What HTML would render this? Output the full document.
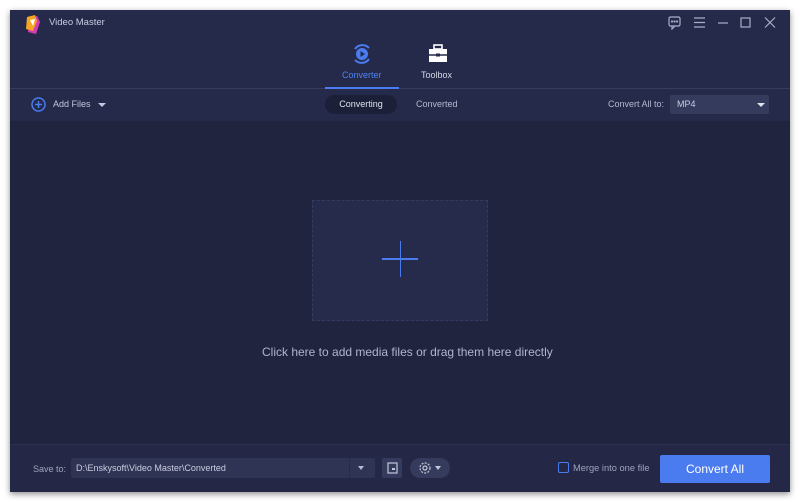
<!DOCTYPE html>
<html><head><style>
*{margin:0;padding:0;box-sizing:border-box}
body{width:800px;height:503px;background:#fff;font-family:"Liberation Sans",sans-serif;position:relative;overflow:hidden}
.win{position:absolute;left:10px;top:10px;width:780px;height:482px;background:#20243f;box-shadow:0 2px 6px rgba(0,0,0,.45)}
.hdr{position:absolute;left:0;top:0;width:780px;height:79px;background:#252a4a;border-bottom:1px solid #363c5e}
.tb{position:absolute;left:0;top:79px;width:780px;height:32px;background:#252a4a}
.bot{position:absolute;left:0;top:434px;width:780px;height:48px;background:#242846;border-top:1px solid #2c3152}
.t{position:absolute;white-space:nowrap}
</style></head><body>
<div class="win">
<div class="hdr">
 <svg class="t" style="left:14px;top:4px" width="20" height="22" viewBox="0 0 20 22">
  <path d="M5 4 L13 2 L16 8 L12 20 L4 18 Z" fill="#d63ab8"/>
  <path d="M3 3 L11 1 L13 7 L9 17 L2 15 Z" fill="#f5a623"/>
  <path d="M6 6 L11 5 L9 12 Z" fill="#fff"/>
 </svg>
 <div class="t" style="left:39px;top:7px;font-size:9.5px;color:#c9cce0">Video Master</div>
 <svg class="t" style="left:658px;top:6px" width="120" height="14" viewBox="0 0 120 14" fill="none" stroke="#a9aec8" stroke-width="1.2">
  <rect x="1" y="1" width="11" height="9" rx="1.5"/><path d="M4 10 L4 13 L7 10"/><circle cx="4" cy="5.5" r=".5" fill="#a9aec8"/><circle cx="6.5" cy="5.5" r=".5" fill="#a9aec8"/><circle cx="9" cy="5.5" r=".5" fill="#a9aec8"/>
  <path d="M26 2h11M26 6.5h11M26 11h11"/>
  <path d="M50 7h10"/>
  <rect x="73" y="2" width="9" height="9"/>
  <path d="M97 1.5l10 10M107 1.5l-10 10"/>
 </svg>
 <svg class="t" style="left:341px;top:33px" width="22" height="22" viewBox="0 0 22 22">
  <path d="M4 6 A9 9 0 0 1 18 5" stroke="#4a7cf0" stroke-width="2" fill="none"/>
  <path d="M18 16 A9 9 0 0 1 4 17" stroke="#4a7cf0" stroke-width="2" fill="none"/>
  <circle cx="11" cy="11" r="6" fill="#4a7cf0"/><path d="M9.5 8v6l4.5-3z" fill="#252a4a"/>
 </svg>
 <div class="t" style="left:332px;top:60px;font-size:9px;color:#4d82f2">Converter</div>
 <div class="t" style="left:315px;top:77px;width:74px;height:2px;background:#4a7cf0"></div>
 <svg class="t" style="left:417px;top:34px" width="22" height="20" viewBox="0 0 22 20">
  <rect x="7" y="1" width="8" height="4" fill="none" stroke="#fff" stroke-width="1.6"/>
  <rect x="2" y="5" width="18" height="13" fill="#fff"/><path d="M2 11h18" stroke="#252a4a" stroke-width="1.5"/><rect x="9" y="9.5" width="4" height="3" fill="#252a4a"/>
 </svg>
 <div class="t" style="left:411px;top:60px;font-size:9px;color:#d4d7e6">Toolbox</div>
</div>
<div class="tb">
 <svg class="t" style="left:21px;top:8px" width="15" height="15" viewBox="0 0 15 15"><circle cx="7.5" cy="7.5" r="6.5" fill="none" stroke="#4a7cf0" stroke-width="1.5"/><path d="M7.5 4v7M4 7.5h7" stroke="#4a7cf0" stroke-width="1.5"/></svg>
 <div class="t" style="left:43px;top:10px;font-size:9px;color:#c4c8dc">Add Files</div>
 <div class="t" style="left:88px;top:14px;border:4px solid transparent;border-top:4px solid #c4c8dc;border-bottom:0"></div>
 <div class="t" style="left:315px;top:6px;width:72px;height:19px;border-radius:10px;background:#1b1f37;color:#e0e2ee;font-size:9px;text-align:center;line-height:19px">Converting</div>
 <div class="t" style="left:406px;top:10px;font-size:9px;color:#b5b9cf">Converted</div>
 <div class="t" style="left:598px;top:10px;font-size:9px;color:#b5b9cf">Convert All to:</div>
 <div class="t" style="left:660px;top:6px;width:99px;height:19px;background:#353b5c;border-radius:2px;color:#c9cce0;font-size:9px;line-height:19px;padding-left:7px">MP4</div>
 <div class="t" style="left:747px;top:14px;border:4px solid transparent;border-top:4px solid #e0e2ee;border-bottom:0"></div>
</div>
<div class="t" style="left:302px;top:190px;width:176px;height:121px;background:#262b4c;border:1px dashed #343a60"></div>
<div class="t" style="left:372px;top:248px;width:36px;height:1.5px;background:#4a7cf0"></div>
<div class="t" style="left:389.5px;top:231px;width:1.5px;height:36px;background:#4a7cf0"></div>
<div class="t" style="left:252px;top:335px;font-size:12px;color:#b1b5cb">Click here to add media files or drag them here directly</div>
<div class="bot">
 <div class="t" style="left:23px;top:19px;font-size:9px;color:#9ea3bd">Save to:</div>
 <div class="t" style="left:61px;top:13px;width:304px;height:20px;background:#2f3454;border-radius:2px;color:#c9cce0;font-size:9px;line-height:20px;padding-left:5px">D:\Enskysoft\Video Master\Converted</div>
 <div class="t" style="left:339px;top:13px;width:1px;height:20px;background:#252a4a"></div>
 <div class="t" style="left:348px;top:21px;border:3.5px solid transparent;border-top:4px solid #b5b9cf;border-bottom:0"></div>
 <div class="t" style="left:372px;top:13px;width:20px;height:20px;background:#353b5c;border-radius:2px"></div>
 <svg class="t" style="left:377px;top:17px" width="11" height="12" viewBox="0 0 11 12"><rect x="1" y="1" width="9" height="10" fill="none" stroke="#c4c8dc" stroke-width="1.2"/><rect x="5" y="6" width="3" height="2" fill="#c4c8dc"/></svg>
 <div class="t" style="left:400px;top:13px;width:40px;height:20px;background:#353b5c;border-radius:10px"></div>
 <svg class="t" style="left:408px;top:16px" width="14" height="14" viewBox="0 0 14 14"><circle cx="7" cy="7" r="5" fill="none" stroke="#c4c8dc" stroke-width="1.2" stroke-dasharray="2 1.3"/><circle cx="7" cy="7" r="2" fill="none" stroke="#c4c8dc" stroke-width="1.2"/></svg>
 <div class="t" style="left:425px;top:21px;border:3.5px solid transparent;border-top:4px solid #c4c8dc;border-bottom:0"></div>
 <div class="t" style="left:548px;top:17px;width:11px;height:11px;border:1px solid #4a7cf0;border-radius:2px"></div>
 <div class="t" style="left:563px;top:18px;font-size:9.3px;color:#9ea3bd">Merge into one file</div>
 <div class="t" style="left:650px;top:10px;width:110px;height:28px;background:#4a7cf0;border-radius:2px;color:#fff;font-size:12px;text-align:center;line-height:28px">Convert All</div>
</div>
</div>
</body></html>
